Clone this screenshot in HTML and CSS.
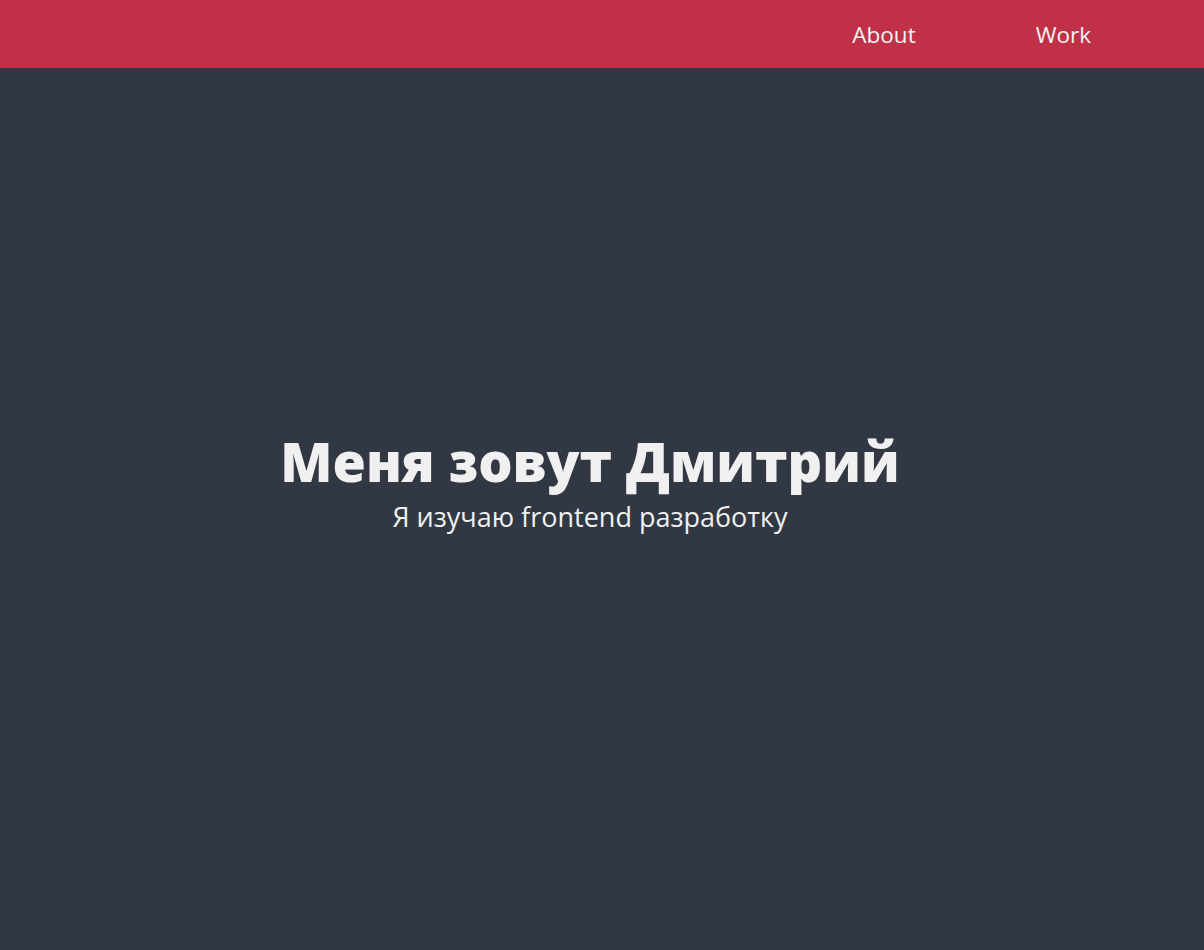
FILE: index.html
```html
<!DOCTYPE html>
<html lang="ru">
<head>
<meta charset="utf-8">
<title>Дмитрий</title>
<link rel="stylesheet" href="styles.css">
</head>
<body>
<header class="header">
  <nav class="nav">
    <a class="nav-link" href="#about">About</a>
    <a class="nav-link" href="#work">Work</a>
  </nav>
</header>
<main class="hero">
  <h1 class="hero-title">Меня зовут Дмитрий</h1>
  <p class="hero-subtitle">Я изучаю frontend разработку</p>
</main>
</body>
</html>
```

FILE: styles.css
```css
* { box-sizing: border-box; }
html, body { margin: 0; padding: 0; }
body {
  background: #313843;
  color: #eeeeee;
  font-family: "Open Sans", "Noto Sans", sans-serif;
}
.header {
  position: fixed;
  top: 0;
  left: 0;
  right: 0;
  height: 68px;
  background: #c03147;
  z-index: 10;
}
.nav {
  height: 100%;
  display: flex;
  justify-content: flex-end;
  align-items: center;
  gap: 120px;
  padding-right: 113px;
}
.nav-link {
  color: #f2f2f2;
  text-decoration: none;
  font-size: 22.5px;
}
.hero {
  height: 100vh;
  display: flex;
  flex-direction: column;
  justify-content: center;
  align-items: center;
  padding-right: 24px;
  padding-top: 8px;
}
.hero-title {
  margin: 0;
  font-size: 54px;
  font-weight: 800;
  line-height: normal;
  color: #f0f0f0;
}
.hero-subtitle {
  margin: 0;
  font-size: 27px;
  line-height: normal;
  color: #f0f0f0;
}
```
